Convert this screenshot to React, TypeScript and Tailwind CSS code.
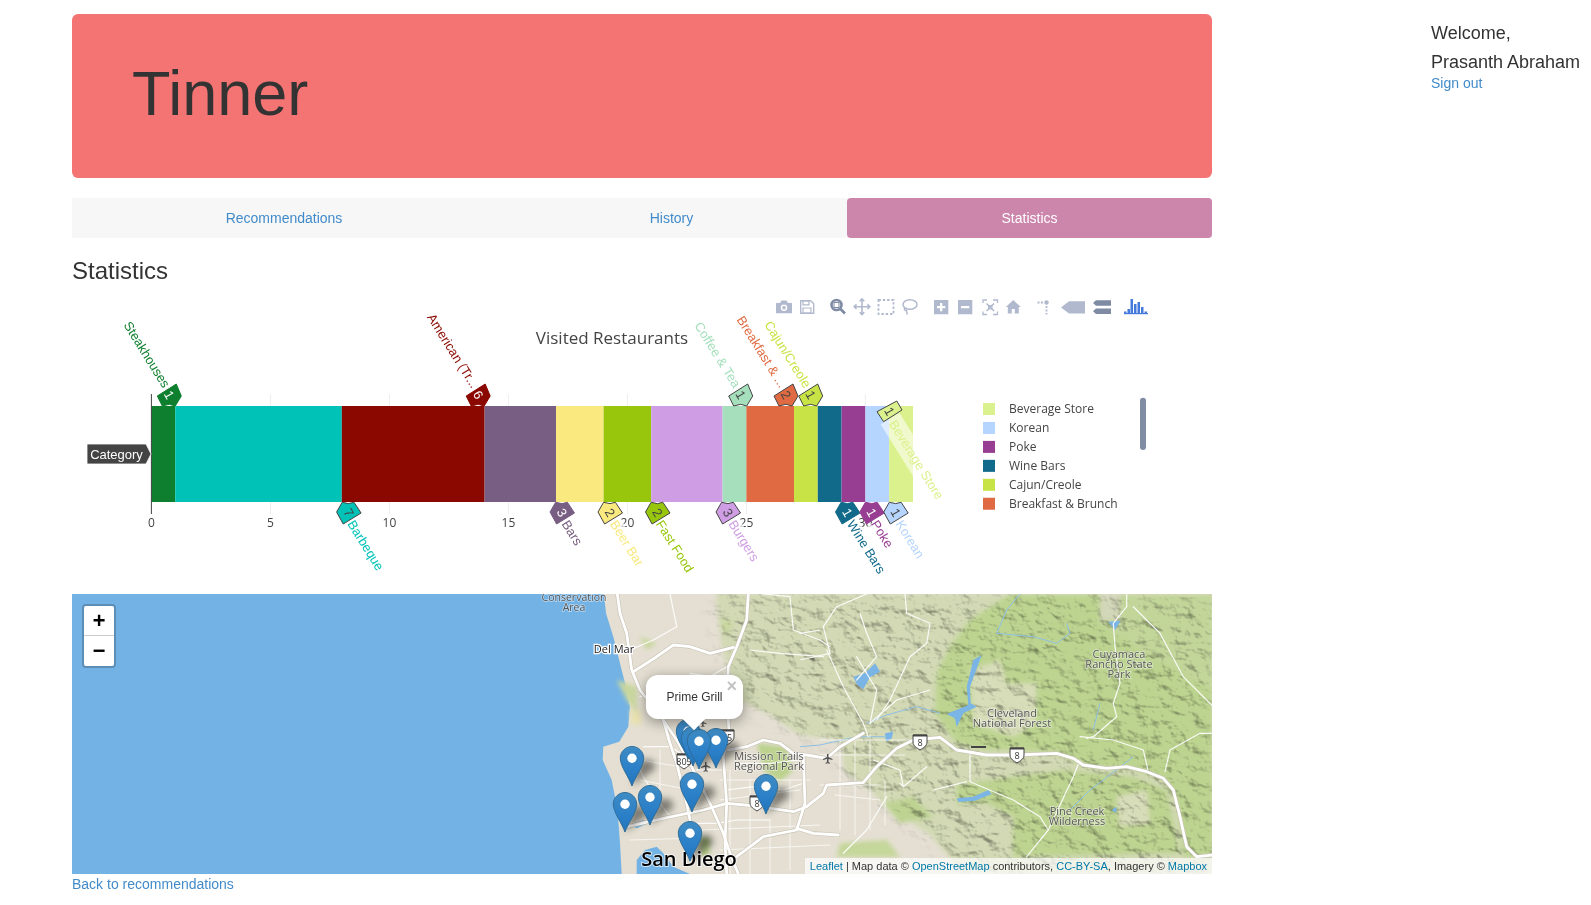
const SANS = "'Liberation Sans', Arial, sans-serif";
const OPEN = "'Open Sans', sans-serif";

// map coordinates were read off two crops of the map, these turn them into page pixels
const conv = (ox: number, oy: number) => (s: string) =>
  s.split(' ').map(p => {
    const [x, y] = p.split(',').map(Number);
    return `${(ox + x / 3).toFixed(1)},${(oy + y / 3).toFixed(1)}`;
  }).join(' ');
const a = conv(530, 590);
const b = conv(800, 590);

const bars = [
  { w: 1, c: '#0e7f2e' }, { w: 7, c: '#00c2b6' }, { w: 6, c: '#8b0800' }, { w: 3, c: '#785e82' },
  { w: 2, c: '#f9e97e' }, { w: 2, c: '#97c60c' }, { w: 3, c: '#cf9de4' }, { w: 1, c: '#a5dfbc' },
  { w: 2, c: '#e06b42' }, { w: 1, c: '#c8e346' }, { w: 1, c: '#116a8a' }, { w: 1, c: '#973e92' },
  { w: 1, c: '#b5d5fe' }, { w: 1, c: '#dbf18d' },
];
const UNIT = 23.8;
const X0 = 151.4;
const ANGLE = 58;

const upTags = [
  { x: 169.3, n: 1, c: '#0e7f2e', t: 'Steakhouses', ex: 166.4, ey: 386.7, dark: true },
  { x: 478.2, n: 6, c: '#8b0800', t: 'American (Tr...', ex: 475, ey: 387, dark: true },
  { x: 740.7, n: 1, c: '#a5dfbc', t: 'Coffee & Tea', ex: 737, ey: 386.7 },
  { x: 786, n: 2, c: '#e06b42', t: 'Breakfast & ...', ex: 783, ey: 386.7 },
  { x: 810.7, n: 1, c: '#c8e346', t: 'Cajun/Creole', ex: 807.5, ey: 386.7 },
];
const downTags = [
  { x: 348.6, n: 7, c: '#00c2b6', t: 'Barbeque', sx: 350.4 },
  { x: 562, n: 3, c: '#785e82', t: 'Bars', sx: 564.6, dark: true },
  { x: 610, n: 2, c: '#f9e97e', t: 'Beer Bar', sx: 613 },
  { x: 657.5, n: 2, c: '#97c60c', t: 'Fast Food', sx: 659 },
  { x: 728, n: 3, c: '#cf9de4', t: 'Burgers', sx: 731.4 },
  { x: 847.5, n: 1, c: '#116a8a', t: 'Wine Bars', sx: 850, dark: true },
  { x: 871.8, n: 1, c: '#973e92', t: 'Poke', sx: 874, dark: true },
  { x: 895.7, n: 1, c: '#b5d5fe', t: 'Korean', sx: 898.6 },
];
const legend = [
  ['Beverage Store', '#dbf18d'], ['Korean', '#b5d5fe'], ['Poke', '#973e92'],
  ['Wine Bars', '#116a8a'], ['Cajun/Creole', '#c8e346'], ['Breakfast & Brunch', '#e06b42'],
];

function TagNum({ x, y, n, dark }: { x: number; y: number; n: number; dark?: boolean }) {
  return (
    <text transform={`translate(${x} ${y}) rotate(60)`} textAnchor="middle" dy="4.5" fontFamily={SANS} fontSize="13" fill={dark ? '#fff' : '#444'}>
      {n}
    </text>
  );
}

function Modebar() {
  const light = '#b1b9ce';
  const mid = '#7f8aa3';
  return (
    <g>
      {/* camera */}
      <path d="M776 303h4l1.5-2.4h5l1.500 2.400h4v10.300h-16z" fill={light} />
      <circle cx="784" cy="307.800" r="3.200" fill="#fff" /><circle cx="784" cy="307.800" r="1.800" fill={light} />
      {/* save */}
      <path d="M800.700 300.700h10l3 3v9.600h-13z" fill="none" stroke={light} strokeWidth="1.400" />
      <path d="M803 301h6v3.800h-6zM803 308h8v5h-8z" fill="none" stroke={light} strokeWidth="1.200" />
      {/* zoom */}
      <circle cx="836.500" cy="305" r="5" fill="#fff" stroke={mid} strokeWidth="2.600" />
      <rect x="834" y="302.500" width="5" height="5" fill="#fff" stroke={mid} strokeWidth="1" />
      <path d="M840.500 309l4.500 4.500" stroke={mid} strokeWidth="2.600" />
      {/* pan */}
      <path d="M862 299v15.500M854 306.700h16M859.700 301.300l2.300-2.300 2.300 2.300M859.700 312.200l2.300 2.300 2.300-2.300M856.500 304.400l-2.300 2.300 2.300 2.300M867.500 304.400l2.300 2.300-2.300 2.300" fill="none" stroke={light} strokeWidth="1.600" />
      {/* box select */}
      <rect x="878.500" y="300" width="15" height="14" fill="none" stroke={light} strokeWidth="1.800" strokeDasharray="2.400 1.900" />
      {/* lasso */}
      <ellipse cx="910" cy="304.500" rx="7" ry="4.800" fill="none" stroke={light} strokeWidth="1.500" />
      <path d="M905 308c-2 2 1 3.500 1.500 1.500 0 2 0 3.500 1 5" fill="none" stroke={light} strokeWidth="1.400" />
      {/* plus / minus */}
      <path d="M934 300h14.300v14.300h-14.300zM940 303v3h-3v2.300h3v3h2.300v-3h3v-2.300h-3v-3z" fill={light} fillRule="evenodd" />
      <path d="M958 300h14.300v14.300h-14.300zM961 306v2.300h8.300v-2.300z" fill={light} fillRule="evenodd" />
      {/* autoscale */}
      <path d="M987 300h-4v3M993 300h4.500v3M987 314.500h-4v-3M993 314.500h4.500v-3" fill="none" stroke={light} strokeWidth="1.300" />
      <path d="M986.500 303.500l7.500 7.500M994 303.500l-7.500 7.500" stroke={light} strokeWidth="1.500" />
      <rect x="988.500" y="305.500" width="3.500" height="3.500" fill="none" stroke={light} strokeWidth="1" />
      {/* home */}
      <path d="M1013.300 300l7.500 7h-2v6.500h-4v-4.500h-3v4.500h-4v-6.500h-2z" fill={light} />
      {/* spikes */}
      <path d="M1037.500 302.500h2M1041 302.500h2" stroke={light} strokeWidth="1.800" />
      <circle cx="1046.500" cy="302.500" r="2.200" fill={light} />
      <path d="M1046.500 306v2M1046.500 309.500v2M1046.500 313v1.500" stroke={light} strokeWidth="1.800" />
      {/* closest data */}
      <path d="M1061 307.500l8-6.300h16v12.300h-16z" fill={light} />
      {/* compare data */}
      <path d="M1096 300.300h15v5.500h-15l-3-2.700zM1096 308.500h15v5.500h-15l-3-2.700z" fill={mid} />
      {/* plotly logo */}
      <g fill="#447adb">
        <rect x="1124" y="311.500" width="2.500" height="2.500" /><rect x="1127.500" y="309" width="2.500" height="5" />
        <rect x="1130.500" y="299" width="2.500" height="15" /><rect x="1134" y="304" width="2.500" height="10" />
        <rect x="1137.500" y="302" width="2.500" height="12" /><rect x="1141" y="307" width="2.500" height="7" />
        <rect x="1144.500" y="311.500" width="2.500" height="2.500" /><rect x="1124" y="313" width="24" height="1.200" />
      </g>
    </g>
  );
}

function Chart() {
  let cur = X0;
  return (
    <svg viewBox="72 284 1140 310" className="block h-[310px] w-[1140px]">
      <Modebar />
      <text x="612" y="344" textAnchor="middle" fontFamily={OPEN} fontSize="17" fill="#444">Visited Restaurants</text>

      {[5, 10, 15, 20, 25, 30].map(v => (
        <line key={v} x1={X0 + v * UNIT} x2={X0 + v * UNIT} y1="394" y2="514" stroke="#eee" />
      ))}
      {[0, 5, 10, 15, 20, 25, 30].map(v => (
        <text key={v} x={X0 + v * UNIT} y="527" textAnchor="middle" fontFamily={OPEN} fontSize="12" fill="#444">{v}</text>
      ))}

      {bars.map(s => {
        const x = cur;
        cur += s.w * UNIT;
        return <rect key={s.c} x={x} y="406" width={s.w * UNIT} height="96" fill={s.c} />;
      })}
      <line x1={X0} x2={X0} y1="394" y2="514" stroke="#444" />

      {/* category hover label */}
      <path d="M87 444h59l5 10-5 10h-59z" fill="#444" stroke="#fff" strokeWidth="0.800" />
      <text x="116.500" y="459" textAnchor="middle" fontFamily={SANS} fontSize="13" fill="#fff">Category</text>

      {upTags.map(t => (
        <g key={t.t}>
          <text transform={`translate(${t.ex} ${t.ey}) rotate(${ANGLE})`} textAnchor="end" dy="4" fontFamily={SANS} fontSize="13" fill={t.c}>{t.t}</text>
          <polygon transform={`translate(${t.x} 395)`} points="7,-11 12,1 6,11 0,9.300 -7,11 -12,1" fill={t.c} stroke={t.dark ? t.c : '#444'} />
          <TagNum x={t.x} y={395} n={t.n} dark={t.dark} />
        </g>
      ))}
      {downTags.map(t => (
        <g key={t.t}>
          <rect transform={`translate(${t.sx} 521.700) rotate(${ANGLE})`} x="0" y="-8" width={t.t.length * 7} height="16" fill="#fff" opacity="0.75" />
          <text transform={`translate(${t.sx} 521.700) rotate(${ANGLE})`} dy="4" fontFamily={SANS} fontSize="13" fill={t.c}>{t.t}</text>
          <polygon transform={`translate(${t.x} 512)`} points="-6.400,-9.700 0,-8.400 5.400,-9.700 12.500,1 -5.400,12 -12,0" fill={t.c} stroke={t.dark ? t.c : '#444'} />
          <TagNum x={t.x} y={512.7} n={t.n} dark={t.dark} />
        </g>
      ))}
      {/* this one sits on the bar, so it has a pale band behind the text */}
      <rect transform={`translate(892 421.700) rotate(${ANGLE})`} x="-4" y="-11" width="100" height="22" fill="#fff" opacity="0.55" />
      <text transform={`translate(892 421.700) rotate(${ANGLE})`} dy="4" fontFamily={SANS} fontSize="13" fill="#dbf18d">Beverage Store</text>
      <polygon points="877,411.700 896.800,401 902,410 883.600,421.700" fill="#dbf18d" stroke="#444" />
      <TagNum x={889.500} y={411.500} n={1} />

      {legend.map(([name, c], i) => (
        <g key={name}>
          <rect x="983" y={403 + i * 18.950} width="12" height="12" fill={c} />
          <text x="1009" y={413.200 + i * 18.950} fontFamily={OPEN} fontSize="12" fill="#444">{name}</text>
        </g>
      ))}
      <rect x="1140" y="397.700" width="6" height="52.300" rx="3" fill="#808ba4" />
    </svg>
  );
}

const majorRoads = [
  a('262,12 270,70 290,130 305,240 330,300 400,390 440,450 475,510 540,640 580,730 600,790 625,852'),
  a('400,390 420,460 440,520 470,640 480,690'),
  a('655,12 650,90 620,170 595,230 590,330 597,420 580,500 590,640 585,760 590,850'),
  a('310,245 380,200 430,165 480,170 540,190 610,172'),
  a('290,710 400,685 520,660 590,640 680,648 790,665 830,650 880,610 890,585 1000,578 1040,530 1100,475 1150,450'),
  a('595,480 650,470 700,450 750,460 790,490 830,495 890,505 930,470 1000,430'),
  a('820,500 825,640 800,720 700,740 620,800'),
  a('800,715 850,730 925,735'),
  b('340,450 420,442 470,480 560,495 650,495 770,490 820,505 850,525 920,535 980,530 1040,545 1090,565 1120,600 1140,680 1160,770 1190,800 1240,795'),
];
const minorRoads = [
  b('315,12 320,70 390,100 380,160 330,200 270,330 230,390'),
  b('980,12 980,50 940,100 945,170 960,280 940,340 950,380 880,440 860,445'),
  b('840,440 940,450 1030,480 1045,545'),
  b('1240,430 1200,430 1110,480 1095,545'),
  b('510,490 510,575 640,630 720,680 745,720 680,800'),
  b('745,720 820,560 840,510'),
  b('80,180 130,290 190,400 205,440'),
  b('0,210 90,190'),
  b('0,130 60,120'),
  b('180,70 200,130 230,200 170,270'),
  b('220,510 300,540 310,590'),
  b('400,600 500,575'),
  b('1000,50 1080,130 1150,260 1240,350'),
  b('260,620 200,720 130,790'),
  b('200,12 110,50 70,110 90,190'),
  b('380,530 310,590 300,580'),
  a('420,12 440,110 370,150 300,180'),
  a('700,12 780,20 790,120 870,150 900,170'),
  a('660,180 750,190 880,200'),
  a('480,250 540,260 590,230'),
  a('330,320 420,300 500,330 590,330'),
  a('340,470 420,470 470,500'),
  a('620,520 720,520 810,510'),
  a('590,600 670,590 760,600 820,580'),
  a('480,540 590,540'),
  a('470,700 560,700 620,690 720,690'),
  a('300,470 340,560 390,640 420,680'),
  a('980,200 1040,300 1020,400 1100,330 1200,300'),
];
const grid = [
  [820, 740, 910, 740], [820, 755, 905, 755], [820, 785, 880, 785], [835, 795, 880, 800],
  [840, 740, 840, 830], [855, 735, 855, 835], [870, 735, 870, 830], [885, 780, 885, 825],
  [640, 760, 700, 770], [640, 780, 690, 790], [660, 750, 660, 810], [720, 780, 810, 780],
  [720, 800, 800, 790], [730, 770, 730, 874], [750, 780, 750, 874], [770, 820, 770, 874],
  [790, 780, 790, 870], [700, 830, 820, 825], [720, 850, 830, 845], [630, 840, 700, 838],
];

function Shield({ x, y, n }: { x: number; y: number; n: string }) {
  return (
    <g>
      <path d={`M${x - 7} ${y - 7}h14v7c0 4-4 6-7 8-3-2-7-4-7-8z`} fill="#fff" stroke="#444" strokeWidth="1" />
      <rect x={x - 7} y={y - 7.500} width="14" height="2" fill="#444" />
      <text x={x} y={y + 4} textAnchor="middle" fontFamily={OPEN} fontSize="9" fill="#333">{n}</text>
    </g>
  );
}

function MapLabel({ x, y, lines, size = 11 }: { x: number; y: number; lines: string[]; size?: number }) {
  return (
    <g>
      {lines.map((l, i) => (
        <text key={l} x={x} y={y + i * 10} textAnchor="middle" fontFamily={OPEN} fontSize={size} fill="#555" stroke="#fff" strokeOpacity="0.5" strokeWidth="1.500" paintOrder="stroke">{l}</text>
      ))}
    </g>
  );
}

function Pin({ x, y }: { x: number; y: number }) {
  return (
    <g transform={`translate(${x - 12.200} ${y - 40}) scale(0.976)`}>
      <path d="M12.500 0.500C5.900 0.500 0.500 5.800 0.500 12.500 0.500 21 9.500 32 12.500 41 15.500 32 24.500 21 24.500 12.500 24.500 5.800 19.100 0.500 12.500 0.500z" fill="url(#pinFill)" stroke="#2e6c97" />
      <circle cx="12.500" cy="12.500" r="4.800" fill="#fff" />
    </g>
  );
}

const pins = [
  [632, 786], [625, 832], [650, 825], [692, 812], [690, 861], [766, 814],
  [688, 759], [693, 766], [716, 768], [699, 769],
];

function MapArt() {
  const hills = '716,594 1212,594 1212,874 1000,874 960,870 930,835 885,805 870,790 845,772 840,740 800,735 770,715 740,700 722,650';
  return (
    <svg viewBox="72 594 1140 280" className="block h-[280px] w-[1140px]">
      <defs>
        <linearGradient id="pinFill" x1="0" y1="0" x2="0" y2="1">
          <stop offset="0" stopColor="#3f8cc4" />
          <stop offset="0.6" stopColor="#2a7fc8" />
          <stop offset="1" stopColor="#2274b8" />
        </linearGradient>
        <filter id="hillshade" filterUnits="userSpaceOnUse" x="600" y="594" width="612" height="280" colorInterpolationFilters="sRGB">
          <feTurbulence type="fractalNoise" baseFrequency="0.06 0.08" numOctaves="4" seed="11" />
          <feDiffuseLighting surfaceScale="2.200" diffuseConstant="1.240" lightingColor="#fff">
            <feDistantLight azimuth="315" elevation="55" />
          </feDiffuseLighting>
        </filter>
        <filter id="soft" x="-20%" y="-20%" width="140%" height="140%"><feGaussianBlur stdDeviation="10" /></filter>
        <filter id="softer" x="-20%" y="-20%" width="140%" height="140%"><feGaussianBlur stdDeviation="2" /></filter>
        <filter id="pinShadow" x="-50%" y="-50%" width="200%" height="200%"><feGaussianBlur stdDeviation="3.500" /></filter>
        <mask id="hillMask" maskUnits="userSpaceOnUse" x="600" y="594" width="612" height="280">
          <polygon points={hills} fill="#fff" filter="url(#soft)" />
        </mask>
      </defs>

      <rect x="72" y="594" width="1140" height="280" fill="#73b2e4" />
      <polygon points={`${a('222,12 228,70 250,140 265,200 285,280 300,350 295,410 268,455 220,470 218,510 245,570 255,620 265,690 270,760 275,852')} 1212,874 1212,594`} fill="#e4dfd2" />

      {/* vegetation */}
      <g filter="url(#softer)">
        <polygon points={hills} fill="#d2d9b4" />
        <polygon points={b('410,250 450,170 510,90 630,12 900,12 900,100 1010,170 1240,300 1240,800 1150,800 1130,640 1090,570 1000,540 850,530 770,490 650,480 560,480 470,460 440,420 405,370')} fill="#bdd490" />
        <polygon points={b('900,100 1010,170 1240,300 1240,12 960,12')} fill="#c3d69a" />
        <polygon points={b('510,240 600,210 620,280 710,280 705,400 640,440 520,400')} fill="#d7ddb8" />
        <polygon points={b('900,12 960,12 960,90 900,90')} fill="#d3d7b9" />
        <polygon points={b('470,585 640,560 790,540 1000,560 1100,600 1140,790 640,800 640,680 560,640 470,640')} fill="#bdd390" />
        <polygon points={b('950,620 1040,600 1050,700 960,710')} fill="#d8ddb9" />
        <polygon points={b('250,640 340,620 400,680 300,700')} fill="#bed392" />
        <polygon points={b('120,760 260,750 300,800 110,800')} fill="#c5d79a" />
        <polygon points={a('680,460 770,470 790,540 750,575 700,540')} fill="#bcd28e" />
        <polygon points={a('510,740 540,745 538,800 512,800')} fill="#bcd08e" />
        <polygon points={a('330,140 380,160 350,180')} fill="#c9d79f" />
        <polygon points={a('565,85 610,95 590,140')} fill="#c9d79f" />
        <polygon points={a('300,360 330,360 335,400 305,405')} fill="#e9e2b0" />
        <polygon points={a('260,270 320,290 320,370 290,330')} fill="#c9d79f" />
      </g>
      {/* the blend has to sit on the masked group, a mask isolates whatever is inside it */}
      <g mask="url(#hillMask)" className="mix-blend-multiply">
        <rect x="600" y="594" width="612" height="280" filter="url(#hillshade)" />
      </g>

      {/* water */}
      <polygon points={a('320,852 320,810 345,780 380,770 400,790 430,830 480,852')} fill="#73b2e4" />
      <polygon points={a('300,705 340,690 355,700 320,715')} fill="#73b2e4" />
      <g fill="#7ab5e6">
        <polygon points={b('160,260 195,250 210,235 225,220 240,245 210,262 190,298 172,285')} />
        <polygon points={b('545,195 520,210 500,290 505,345 440,372 465,385 470,412 490,370 530,350 512,340 510,290')} />
        <polygon points={b('925,95 962,92 945,120')} />
        <polygon points={b('470,625 520,620 565,600 575,612 525,632 475,636')} />
        <polygon points={b('255,430 280,425 275,445 258,455')} />
        <polygon points={b('935,660 950,650 948,668')} />
      </g>
      <g fill="none" stroke="#8fc0e6" strokeWidth="1">
        <polyline points={b('200,400 260,375 350,350 420,370')} />
        <polyline points={b('590,130 700,140 770,160 810,130 800,100')} />
        <polyline points={b('0,470 60,465 170,440 260,440')} />
        <polyline points={b('880,420 900,340')} />
        <polyline points={b('660,12 620,60 590,130')} />
        <polyline points={b('810,660 870,600 1000,500')} />
      </g>

      {/* roads */}
      <g fill="none" stroke="#fff" strokeLinejoin="round" strokeLinecap="round">
        <g strokeWidth="1" opacity="0.7">
          {grid.map(([x1, y1, x2, y2]) => <line key={`${x1}-${y1}-${x2}`} x1={x1} y1={y1} x2={x2} y2={y2} />)}
        </g>
        <g strokeWidth="1.200" opacity="0.9">
          {minorRoads.map(p => <polyline key={p} points={p} />)}
        </g>
        <g stroke="#c9c3b4" strokeWidth="4">
          {majorRoads.map(p => <polyline key={p} points={p} />)}
        </g>
        <g strokeWidth="2.800">
          {majorRoads.map(p => <polyline key={p} points={p} />)}
        </g>
      </g>

      <Shield x={684} y={761} n="805" />
      <Shield x={727} y={737} n="15" />
      <Shield x={757} y={803} n="8" />
      <Shield x={920} y={742} n="8" />
      <Shield x={1017} y={755} n="8" />
      <rect x="971" y="746" width="15" height="2" fill="#444" />
      <g fill="#555">
        <path d="M827 754h1.500v3l4 2v1l-4-1v3l1.500 1v.8l-2.200-.6-2.300.6v-.8l1.500-1v-3l-4 1v-1l4-2z" />
        <path d="M705 762h1.500v3l4 2v1l-4-1v3l1.500 1v.8l-2.200-.6-2.300.6v-.8l1.500-1v-3l-4 1v-1l4-2z" />
        <path d="M702 720h1.500v2l3 1.500v.8l-3-.8v2l1 .8v.6l-1.700-.4-1.700.4v-.6l1-.8v-2l-3 .8v-.8l3-1.500z" />
      </g>

      <MapLabel x={574} y={601} lines={['Conservation', 'Area']} size={10.500} />
      <text x="614" y="653" textAnchor="middle" fontFamily={OPEN} fontSize="11" fill="#222" stroke="#fff" strokeWidth="2.500" paintOrder="stroke">Del Mar</text>
      <MapLabel x={769} y={760} lines={['Mission Trails', 'Regional Park']} />
      <MapLabel x={1012} y={717} lines={['Cleveland', 'National Forest']} />
      <MapLabel x={1077} y={815} lines={['Pine Creek', 'Wilderness']} />
      <MapLabel x={1119} y={658} lines={['Cuyamaca', 'Rancho State', 'Park']} />
      <text x="689" y="866" textAnchor="middle" fontFamily={OPEN} fontSize="20" fontWeight="600" fill="#000" stroke="#fff" strokeOpacity="0.7" strokeWidth="2" paintOrder="stroke">San Diego</text>

      {/* pin shadows */}
      <g fill="#000" opacity="0.45" filter="url(#pinShadow)">
        {pins.map(([x, y]) => <path key={`s${x}-${y}`} d={`M${x} ${y}l8-26h12l4 8z`} />)}
      </g>
      {pins.map(([x, y]) => <Pin key={`${x}-${y}`} x={x} y={y} />)}
    </svg>
  );
}

function LeafletMap() {
  return (
    <div className="relative h-[280px] w-[1140px] overflow-hidden font-['Liberation_Sans',Arial,sans-serif]">
      <MapArt />
      <div className="absolute left-[10px] top-[10px] w-[34px] rounded-[4px] border-2 border-[rgba(0,0,0,0.2)] bg-clip-padding">
        <div className="flex h-[30px] items-center justify-center rounded-t-[2px] border-b border-[#ccc] bg-white pt-[3px] font-['Liberation_Mono',monospace] text-[22px] font-bold text-black">+</div>
        <div className="flex h-[30px] items-center justify-center rounded-b-[2px] bg-white pt-[2px] font-['Liberation_Mono',monospace] text-[22px] font-bold text-black">−</div>
      </div>

      <div className="absolute left-[574px] top-[81px] flex h-[44px] w-[97px] items-center justify-center rounded-[12px] bg-white text-[12px] text-[#333] shadow-[0_3px_14px_rgba(0,0,0,0.4)]">
        Prime Grill
        <span className="absolute left-[40px] top-[36px] size-[16px] rotate-45 bg-white" />
        <span className="absolute right-[6px] top-[2px] text-[18px] font-bold leading-[18px] text-[#c3c3c3]">×</span>
      </div>

      <div className="absolute bottom-0 right-0 whitespace-nowrap bg-[rgba(255,255,255,0.7)] px-[5px] text-[11px] leading-[16px] text-[#333]">
        <a className="text-[#0078a8]">Leaflet</a> | Map data © <a className="text-[#0078a8]">OpenStreetMap</a> contributors, <a className="text-[#0078a8]">CC-BY-SA</a>, Imagery © <a className="text-[#0078a8]">Mapbox</a>
      </div>
    </div>
  );
}

export default function App() {
  return (
    <div className="flex bg-white font-['Liberation_Sans',Arial,sans-serif] text-[14px] text-[#333]">
      <main className="ml-[72px] w-[1140px] shrink-0 pt-[14px]">
        <header className="h-[164px] rounded-[6px] bg-[#f47373] pl-[60px] pt-[45px]">
          <h1 className="text-[63px] font-normal leading-[69px] text-[#333]">Tinner</h1>
        </header>

        <nav className="mt-[20px] flex h-[40px] bg-[#f7f7f7] text-[#428bca]">
          <a className="flex w-[424px] items-center justify-center">Recommendations</a>
          <a className="flex w-[351px] items-center justify-center">History</a>
          <a className="flex w-[365px] items-center justify-center rounded-[4px] bg-[#cc85ab] text-white">Statistics</a>
        </nav>

        <h2 className="mt-[20px] text-[24px] font-normal leading-[26px] text-[#333]">Statistics</h2>
        <Chart />
        <LeafletMap />
        <a className="block leading-[20px] text-[#428bca]">Back to recommendations</a>
      </main>

      <aside className="ml-[219px] pt-[18px]">
        <p className="text-[18px] leading-[30px] text-[#333]">Welcome,</p>
        <p className="-mt-px whitespace-nowrap text-[18px] leading-[30px] text-[#333]">Prasanth Abraham</p>
        <a className="-mt-1 block leading-[20px] text-[#428bca]">Sign out</a>
      </aside>
    </div>
  );
}
